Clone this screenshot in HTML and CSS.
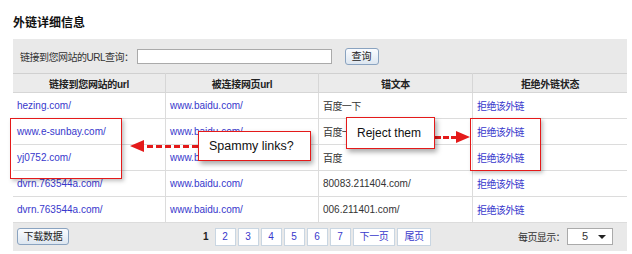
FILE: index.html
```html
<!DOCTYPE html>
<html lang="zh">
<head>
  <meta charset="UTF-8" />
  <title>外链详细信息</title>
  <link rel="stylesheet" href="styles.css">
</head>
<body>
  <div class="page">
    <h1>外链详细信息</h1>

    <div class="panel">
      <div class="search">
        <label for="q">链接到您网站的URL查询：</label>
        <input type="text" id="q" />
        <button class="btn">查询</button>
      </div>

      <table class="links">
        <thead>
          <tr>
            <th class="c1">链接到您网站的url</th>
            <th class="c2">被连接网页url</th>
            <th class="c3">锚文本</th>
            <th class="c4">拒绝外链状态</th>
          </tr>
        </thead>
        <tbody>
          <tr>
            <td><a href="#">hezing.com/</a></td>
            <td><a href="#">www.baidu.com/</a></td>
            <td class="cn">百度一下</td>
            <td class="cn"><a href="#">拒绝该外链</a></td>
          </tr>
          <tr>
            <td><a href="#">www.e-sunbay.com/</a></td>
            <td><a href="#">www.baidu.com/</a></td>
            <td class="cn">百度一下</td>
            <td class="cn"><a href="#">拒绝该外链</a></td>
          </tr>
          <tr>
            <td><a href="#">yj0752.com/</a></td>
            <td><a href="#">www.baidu.com/</a></td>
            <td class="cn">百度</td>
            <td class="cn"><a href="#">拒绝该外链</a></td>
          </tr>
          <tr>
            <td><a href="#">dvrn.763544a.com/</a></td>
            <td><a href="#">www.baidu.com/</a></td>
            <td>80083.211404.com/</td>
            <td class="cn"><a href="#">拒绝该外链</a></td>
          </tr>
          <tr>
            <td><a href="#">dvrn.763544a.com/</a></td>
            <td><a href="#">www.baidu.com/</a></td>
            <td>006.211401.com/</td>
            <td class="cn"><a href="#">拒绝该外链</a></td>
          </tr>
        </tbody>
      </table>

      <div class="footer">
        <button class="btn">下载数据</button>
        <div class="pager">
          <span class="cur">1</span>
          <a class="pg" href="#">2</a>
          <a class="pg" href="#">3</a>
          <a class="pg" href="#">4</a>
          <a class="pg" href="#">5</a>
          <a class="pg" href="#">6</a>
          <a class="pg" href="#">7</a>
          <a class="pg wide" href="#">下一页</a>
          <a class="pg wide" href="#">尾页</a>
        </div>
        <div class="perpage">
          <span class="cn">每页显示：</span>
          <div class="select">5 <span class="caret"></span></div>
        </div>
      </div>

      <!-- annotations -->
      <div class="mark mark-left"></div>
      <div class="mark mark-right"></div>
      <div class="arrow arrow-left"></div>
      <div class="arrow arrow-right"></div>
      <div class="note note-spam">Spammy links?</div>
      <div class="note note-reject">Reject them</div>
    </div>
  </div>
</body>
</html>
```

FILE: styles.css
```css
body {
  margin: 0;
  background: #fff;
  font-family: "Liberation Sans", "Noto Sans CJK SC", sans-serif;
  font-size: 10px;
  color: #222;
}
.cn {
  letter-spacing: -0.6px;
}
.page {
  padding: 15px 5px 0 13px;
}
h1 {
  margin: 0 0 8px 0;
  font-size: 12px;
  line-height: 16px;
  font-weight: bold;
  color: #111;
}
.panel {
  position: relative;
  width: 614px;
  background: #e9e9e9;
  padding-bottom: 1px;
}
.search {
  display: flex;
  align-items: center;
  height: 34px;
  padding-left: 7px;
}
.search label {
  color: #333;
  letter-spacing: -0.5px;
}
.search input {
  width: 191px;
  height: 11px;
  margin-left: 3px;
  margin-top: 1px;
  padding: 1px;
  border: 1px solid #aaa;
  background: #fff;
}
.btn {
  font-family: inherit;
  font-size: 10px;
  color: #222;
  background: linear-gradient(#fafcff, #dde6f0);
  border: 1px solid #8aa3c0;
  border-radius: 3px;
  height: 17px;
  padding: 0 6px;
  line-height: 14px;
}
.search .btn {
  margin-left: 13px;
  margin-top: 1px;
}
.links {
  width: 614px;
  border-collapse: collapse;
  background: #fff;
  table-layout: fixed;
}
.links th {
  background: #ebebeb;
  height: 18px;
  font-weight: bold;
  color: #222;
  border: 1px solid #d6d6d6;
  border-top-color: #d0d0d0;
  padding: 0;
  letter-spacing: -0.3px;
}
.links .c1 { width: 152px; }
.links .c2 { width: 152px; }
.links .c3 { width: 153px; }
.links td {
  height: 25px;
  padding: 0 0 0 4px;
  border: 1px solid #dcdcdc;
  color: #333;
}
.links tr > :first-child { border-left: none; }
.links tr > :last-child { border-right: none; }
.links a {
  color: #3838cc;
  text-decoration: none;
}
.footer {
  display: flex;
  align-items: center;
  height: 27px;
  padding: 0 14px 0 4px;
}
.footer .btn {
  width: 52px;
  padding: 0;
  letter-spacing: -0.3px;
}
.pager {
  display: flex;
  align-items: center;
  margin-left: 134px;
}
.cur {
  font-weight: bold;
  margin-right: 6px;
}
.pg {
  display: inline-block;
  width: 19px;
  height: 16px;
  line-height: 16px;
  text-align: center;
  margin-right: 2px;
  background: #fff;
  border: 1px solid #c9d6e2;
  color: #3838cc;
  text-decoration: none;
}
.pg.wide {
  width: auto;
  padding: 0 6px;
  letter-spacing: -0.4px;
}
.perpage {
  margin-left: auto;
  display: flex;
  align-items: center;
  color: #333;
}
.select {
  position: relative;
  margin-left: 2px;
  width: 30px;
  height: 15px;
  line-height: 15px;
  padding-left: 14px;
  border: 1px solid #aaa;
  background: #fff;
  font-size: 11px;
}
.caret {
  position: absolute;
  right: 6px;
  top: 6px;
  border-left: 4px solid transparent;
  border-right: 4px solid transparent;
  border-top: 4px solid #222;
}

/* annotation layer */
.mark {
  position: absolute;
  border: 1px solid #e41a1a;
  box-shadow: 2px 2px 4px rgba(0, 0, 0, 0.25);
}
.mark-left {
  left: -3px;
  top: 79px;
  width: 110px;
  height: 59px;
}
.mark-right {
  left: 457px;
  top: 79px;
  width: 69px;
  height: 51px;
}
.note {
  position: absolute;
  background: #fff;
  border: 1px solid #e41a1a;
  box-shadow: 2px 3px 5px rgba(0, 0, 0, 0.35);
  font-family: "Liberation Sans", sans-serif;
  font-size: 12.5px;
  color: #111;
  padding-left: 10px;
  box-sizing: border-box;
}
.note-spam {
  left: 185px;
  top: 92px;
  width: 113px;
  height: 30px;
  line-height: 28px;
}
.note-reject {
  left: 333px;
  top: 78px;
  width: 89px;
  height: 32px;
  line-height: 30px;
  font-size: 12px;
}
.arrow {
  position: absolute;
  height: 0;
  border-top: 3px dashed #e41a1a;
}
.arrow::after {
  content: "";
  position: absolute;
  top: -8px;
  border-top: 6.5px solid transparent;
  border-bottom: 6.5px solid transparent;
}
.arrow-left {
  left: 125px;
  top: 106px;
  width: 60px;
}
.arrow-left::after {
  left: -8px;
  border-right: 14px solid #e41a1a;
}
.arrow-right {
  left: 422px;
  top: 97px;
  width: 22px;
}
.arrow-right::after {
  right: -13px;
  border-left: 14px solid #e41a1a;
}
```
